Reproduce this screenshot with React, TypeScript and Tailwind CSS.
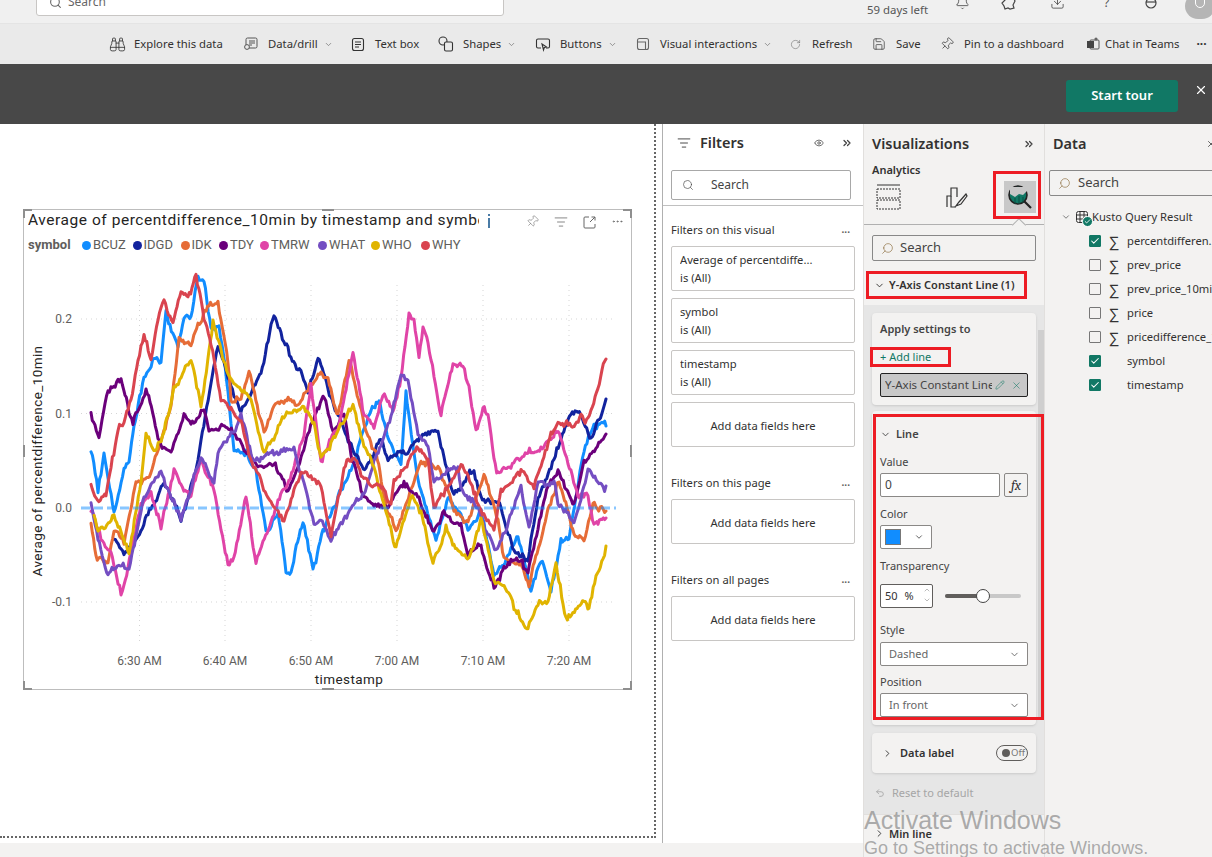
import React from "react";
import { Binoculars, ChevronDown, ChevronRight, ChevronUp, ChevronsRight, Search, Bell, Download, Save, Pin, RotateCw, X, Pencil, Eye, Ellipsis, ListFilter, Undo2, Check } from "lucide-react";

type P = [number, number];
const series: { c: string; p: P[] }[] = [
  { c: "#118DFF", p: [[90,448],[97,490],[103,453],[113,510],[123,467],[128,460],[133,427],[143,380],[153,357],[160,363],[165,313],[177,347],[183,317],[190,317],[197,273],[203,283],[210,327],[218,323],[227,387],[233,447],[245,450],[255,470],[265,530],[277,515],[285,570],[290,572],[302,517],[312,567],[322,533],[333,507],[350,470],[370,410],[378,397],[390,447],[400,460],[405,390],[417,483],[435,540],[447,497],[467,527],[480,507],[493,573],[507,553],[517,537],[530,588],[540,558],[550,588],[560,537],[568,537],[583,450],[593,427],[605,425]] },
  { c: "#12239E", p: [[113,540],[123,557],[147,517],[163,480],[180,517],[197,457],[210,383],[217,343],[230,387],[240,410],[260,370],[273,313],[287,350],[307,390],[317,352],[327,390],[340,423],[353,450],[365,470],[380,437],[387,457],[405,450],[423,433],[437,430],[443,457],[453,493],[473,470],[480,497],[500,505],[513,547],[527,563],[537,497],[553,457],[567,420],[577,410],[590,440],[605,398]] },
  { c: "#E66C37", p: [[90,523],[95,557],[107,560],[113,527],[123,540],[135,480],[147,480],[160,440],[170,400],[178,333],[190,343],[197,320],[208,303],[217,303],[227,360],[230,397],[240,397],[248,367],[263,433],[273,403],[297,403],[320,372],[327,380],[337,417],[348,357],[363,423],[375,453],[387,513],[395,533],[420,463],[437,467],[453,510],[467,523],[483,470],[497,520],[503,557],[517,560],[528,583],[547,510],[558,482],[573,533],[583,538],[592,500],[605,510]] },
  { c: "#6B007B", p: [[90,412],[98,438],[107,390],[120,377],[132,423],[145,385],[157,437],[170,453],[183,410],[190,422],[203,407],[208,430],[222,427],[233,430],[243,447],[257,467],[273,463],[287,490],[300,457],[307,430],[322,397],[333,433],[343,417],[350,453],[363,497],[383,507],[403,483],[418,495],[433,533],[443,513],[460,523],[467,550],[480,547],[493,588],[503,567],[517,557],[527,573],[547,487],[557,470],[565,487],[573,507],[583,460],[592,452],[605,433]] },
  { c: "#E044A7", p: [[90,510],[100,537],[110,553],[120,590],[127,565],[140,500],[150,490],[160,525],[173,467],[180,483],[190,495],[200,460],[213,487],[227,563],[233,557],[245,497],[255,563],[277,500],[292,470],[303,433],[310,387],[320,460],[337,427],[352,352],[363,413],[373,427],[382,393],[392,413],[400,380],[408,317],[413,322],[418,353],[422,328],[427,343],[433,373],[440,417],[452,367],[462,367],[468,390],[475,432],[482,407],[487,417],[493,460],[497,473],[520,457],[547,440],[557,427],[567,460],[577,493],[587,493],[593,523],[605,517]] },
  { c: "#744EC2", p: [[90,500],[97,543],[107,577],[115,563],[128,570],[143,497],[160,470],[180,518],[200,453],[213,483],[217,453],[233,430],[240,413],[253,460],[273,450],[293,450],[303,483],[313,522],[320,518],[330,537],[347,510],[363,493],[380,447],[400,378],[407,383],[417,433],[427,447],[433,483],[457,463],[460,487],[477,507],[495,550],[520,487],[528,525],[537,480],[553,480],[557,502],[573,520],[587,467],[605,485]] },
  { c: "#E0B400", p: [[93,513],[97,533],[113,517],[128,550],[140,483],[145,430],[153,453],[163,433],[173,390],[190,355],[200,407],[212,323],[227,373],[240,387],[250,397],[263,453],[280,420],[303,407],[313,420],[320,453],[330,443],[352,402],[363,447],[370,460],[383,507],[395,545],[410,492],[420,507],[432,560],[445,527],[453,548],[468,557],[480,513],[493,578],[503,583],[513,607],[527,628],[537,598],[547,605],[555,563],[565,618],[583,598],[588,608],[595,575],[605,545]] },
  { c: "#D9444F", p: [[90,485],[95,505],[105,498],[110,470],[117,430],[123,423],[130,400],[137,360],[143,332],[150,357],[157,317],[163,300],[172,323],[180,293],[187,303],[195,275],[203,317],[213,357],[220,400],[230,407],[240,417],[248,453],[257,470],[267,497],[283,520],[300,470],[320,483],[330,538],[343,470],[353,455],[363,480],[383,487],[390,507],[393,483],[413,453],[420,447],[427,460],[433,510],[460,463],[477,503],[493,530],[500,490],[520,470],[533,483],[550,433],[557,422],[573,427],[580,410],[587,417],[597,383],[605,358]] },
];

function jitter(pts: P[], seed: number) {
  let s = seed * 7919 + 13;
  const rnd = () => { s = (s * 16807) % 2147483647; return (s % 1000) / 1000 - 0.5; };
  const out: string[] = [];
  let walk = 0;
  for (let i = 0; i < pts.length - 1; i++) {
    const [a, b] = pts[i]; const [c, d] = pts[i + 1];
    const n = Math.max(1, Math.round((c - a) / 1.4));
    for (let k = 0; k < n; k++) {
      const t = k / n;
      walk = walk * 0.8 + rnd() * 4.5;
      const off = walk + rnd() * 4;
      out.push(`${(a + (c - a) * t - 23).toFixed(1)},${(b + (d - b) * t + off - 209).toFixed(1)}`);
    }
  }
  const l = pts[pts.length - 1];
  out.push(`${l[0] - 23},${l[1] - 209}`);
  return out.join(" ");
}

const font = "[font-family:'Noto_Sans',sans-serif]";

function Tool({ w, icon, label, caret }: { w: string; icon: React.ReactNode; label: string; caret?: boolean }) {
  return (
    <div className={`flex items-center shrink-0 ${w}`}>
      <span className="w-[18px] h-[18px] flex items-center justify-center mr-[8px] text-[#333]">{icon}</span>
      <span className="text-[11.3px] text-[#323130] whitespace-nowrap">{label}</span>
      {caret && <ChevronDown size={9} className="ml-[6px] text-[#777]" />}
    </div>
  );
}

function FilterCard({ title }: { title: string }) {
  return (
    <div className="h-[45px] border border-[#c8c6c4] rounded-[2px] bg-white px-[8px] pt-[4px] mb-[7px] text-[11.2px] leading-[18px] text-[#323130]">
      <div className="truncate">{title}</div>
      <div>is (All)</div>
    </div>
  );
}
function AddCard() {
  return <div className="h-[45px] border border-[#c8c6c4] rounded-[2px] bg-white flex items-center justify-center pt-[3px] text-[11.2px] text-[#323130]">Add data fields here</div>;
}
function SecHead({ t }: { t: string }) {
  return (
    <div className="flex items-center justify-between h-[16px] mb-[8px] text-[11.2px] text-[#323130]">
      <span>{t}</span><span className="text-[#605e5c] mr-[5px] text-[10px] font-bold -mt-[2px]">...</span>
    </div>
  );
}

function Field({ label, checked, sigma = true }: { label: string; checked?: boolean; sigma?: boolean }) {
  return (
    <div className="h-[24px] flex items-center pl-[44px] text-[11.2px] text-[#323130] whitespace-nowrap">
      <span className={`w-[12px] h-[12px] shrink-0 rounded-[1px] flex items-center justify-center border ${checked ? "bg-[#117865] border-[#117865]" : "bg-[#f3f2f1] border-[#777]"}`}>
        {checked && <Check size={10} strokeWidth={2.5} className="text-white" />}
      </span>
      <span className="w-[26px] shrink-0 text-center text-[15px] leading-none text-[#333] font-light">{sigma ? "∑" : ""}</span>
      <span className="shrink-0">{label}</span>
    </div>
  );
}

function Handle({ cls }: { cls: string }) {
  return <div className={`absolute ${cls}`} />;
}

export default function App() {
  return (
    <div className={`relative w-[1212px] h-[857px] overflow-hidden bg-white flex flex-col ${font}`}>
      {/* top bar */}
      <div className="h-[24px] shrink-0 bg-[#f0f0f0] border-b border-[#e4e4e4] overflow-hidden flex items-start text-[#444]">
        <div className="ml-[36px] -mt-[12px] w-[468px] h-[28px] shrink-0 bg-white border border-[#c8c6c4] rounded-[3px] flex items-center pl-[12px] text-[12px] text-[#666]">
          <Search size={13} className="mr-[6px]" />Search
        </div>
        <div className="ml-[363px] mt-[1px] text-[11.4px] text-[#555] w-[70px] shrink-0 whitespace-nowrap">59 days left</div>
        <Bell size={15} strokeWidth={1.3} className="ml-[18px] -mt-[5px] shrink-0" />
        <svg width="18" height="16" viewBox="0 0 18 16" className="ml-[31px] -mt-[5px] shrink-0" fill="none" stroke="#444" strokeWidth="1.2"><path d="M6 2h6l2 4-2 4 1 3-4 1-2-1-3 1-1-3-2-3 3-3z" /></svg>
        <Download size={15} strokeWidth={1.3} className="ml-[31px] -mt-[5px] shrink-0" />
        <span className="ml-[39px] -mt-[6px] text-[12px] text-[#555]">?</span>
        <svg width="14" height="14" viewBox="0 0 14 14" className="ml-[35px] -mt-[4px] shrink-0" fill="none" stroke="#444" strokeWidth="1.2"><circle cx="7" cy="7" r="5" /><path d="M2 6h10" /></svg>
        <div className="ml-[27px] -mt-[7px] w-[30px] h-[26px] rounded-full bg-[#b5b5b5] shrink-0 flex items-start justify-center"><div className="w-[10px] h-[14px] rounded-full border border-white mt-[1px]" /></div>
      </div>

      {/* toolbar */}
      <div className="h-[40px] shrink-0 bg-[#eaeaea] flex items-center pl-[108px]">
        <Tool w="w-[134px]" icon={<Binoculars size={17} strokeWidth={1.2} />} label="Explore this data" />
        <Tool w="w-[107px]" icon={<svg width="16" height="16" viewBox="0 0 16 16" fill="none" stroke="#555" strokeWidth="1"><rect x="3" y="2" width="11" height="10" rx="1.5" /><path d="M6 5h6M6 7h6M6 9h3" /><circle cx="4" cy="11" r="2.4" fill="#eaeaea" /></svg>} label="Data/drill" caret />
        <Tool w="w-[88px]" icon={<svg width="14" height="15" viewBox="0 0 14 15" fill="none" stroke="#333" strokeWidth="1.1"><rect x="1.5" y="1.5" width="11" height="12" rx="2" /><path d="M4 5h6M4 7.5h6M4 10h4" /></svg>} label="Text box" />
        <Tool w="w-[97px]" icon={<svg width="16" height="16" viewBox="0 0 16 16" fill="none" stroke="#333" strokeWidth="1.1"><circle cx="5" cy="5" r="4" /><rect x="6.5" y="6" width="8" height="9" rx="1.5" fill="#eaeaea" /></svg>} label="Shapes" caret />
        <Tool w="w-[100px]" icon={<svg width="16" height="15" viewBox="0 0 16 15" fill="none" stroke="#333" strokeWidth="1.1"><path d="M6 11H3a1.5 1.5 0 0 1-1.5-1.5v-6A1.5 1.5 0 0 1 3 2h10a1.5 1.5 0 0 1 1.5 1.5v6A1.5 1.5 0 0 1 13 11h-2" /><path d="M7 7l4.5 3-2.2.5-.8 2.5z" /></svg>} label="Buttons" caret />
        <Tool w="w-[152px]" icon={<svg width="14" height="14" viewBox="0 0 14 14" fill="none" stroke="#666" strokeWidth="1.1"><rect x="1.5" y="1.5" width="11" height="11" rx="2" /><path d="M1.5 5h8v7.5" /></svg>} label="Visual interactions" caret />
        <Tool w="w-[84px]" icon={<RotateCw size={11} strokeWidth={1.2} className="text-[#666]" />} label="Refresh" />
        <Tool w="w-[68px]" icon={<Save size={14} strokeWidth={1.2} />} label="Save" />
        <Tool w="w-[148px]" icon={<Pin size={14} strokeWidth={1.2} className="rotate-45" />} label="Pin to a dashboard" />
        <div className="flex items-center shrink-0">
          <svg width="14" height="14" viewBox="0 0 14 14" className="mr-[5px]"><rect x="4" y="3" width="9" height="9" rx="1" fill="none" stroke="#555" /><rect x="1" y="4" width="7" height="7" fill="#444" /><circle cx="10" cy="2" r="1.6" fill="#666" /></svg>
          <span className="text-[11.3px] text-[#323130] whitespace-nowrap">Chat in Teams</span>
          <span className="ml-[17px] text-[12px] text-[#333] font-bold leading-none -mt-[6px]">...</span>
        </div>
      </div>

      {/* banner */}
      <div className="h-[60px] shrink-0 bg-[#484848] flex items-center justify-end">
        <button className="mt-[3px] w-[112px] h-[32px] rounded-[3px] bg-[#117865] text-white text-[13px] font-semibold">Start tour</button>
        <X size={14} className="text-white ml-[16px] mr-[4px] -mt-[9px]" />
      </div>

      {/* main */}
      <div className="flex-1 min-h-0 flex">
        {/* canvas */}
        <div className="w-[663px] shrink-0 flex flex-col">
          <div className="flex-1 min-h-0 flex border-r border-[#b0b0b0] bg-white">
            <div className="w-[656px] h-[714px] border-r-2 border-b-2 border-dotted border-[#666] pl-[23px] pt-[85px]">
              {/* visual */}
              <div className="relative w-[609px] h-[481px] border border-[#bdbdbd]">
                <Handle cls="-left-[1px] -top-[1px] w-[9px] h-[2px] bg-[#8f8f8f]" />
                <Handle cls="-left-[1px] -top-[1px] w-[2px] h-[9px] bg-[#8f8f8f]" />
                <Handle cls="-right-[1px] -top-[1px] w-[9px] h-[2px] bg-[#8f8f8f]" />
                <Handle cls="-right-[1px] -top-[1px] w-[2px] h-[9px] bg-[#8f8f8f]" />
                <Handle cls="-left-[1px] -bottom-[1px] w-[9px] h-[2px] bg-[#8f8f8f]" />
                <Handle cls="-left-[1px] -bottom-[1px] w-[2px] h-[9px] bg-[#8f8f8f]" />
                <Handle cls="-right-[1px] -bottom-[1px] w-[9px] h-[2px] bg-[#8f8f8f]" />
                <Handle cls="-right-[1px] -bottom-[1px] w-[2px] h-[9px] bg-[#8f8f8f]" />
                <Handle cls="left-[298px] -top-[1px] w-[12px] h-[2px] bg-[#8f8f8f]" />
                <Handle cls="left-[298px] -bottom-[1px] w-[12px] h-[2px] bg-[#8f8f8f]" />
                <Handle cls="-left-[1px] top-[235px] w-[2px] h-[12px] bg-[#8f8f8f]" />
                <Handle cls="-right-[1px] top-[235px] w-[2px] h-[12px] bg-[#8f8f8f]" />

                <svg width="609" height="481" className="absolute left-0 top-0" viewBox="0 0 609 481">
                  <g stroke="#d5d5d5" strokeWidth="1" strokeDasharray="1 4" fill="none">
                    {[109, 203.5, 392].map((y) => <path key={y} d={`M57 ${y}H592`} />)}
                    {[115.5, 201, 287, 373, 459, 545].map((x) => <path key={x} d={`M${x} 75V431`} />)}
                  </g>
                  {series.map((s, i) => (
                    <polyline key={s.c} points={jitter(s.p, i + 2)} fill="none" stroke={s.c} strokeWidth="3" strokeLinejoin="round" strokeLinecap="round" />
                  ))}
                  <path d="M57 298H592" stroke="#118DFF" strokeOpacity="0.5" strokeWidth="3" strokeDasharray="9 4" />
                  <g fontFamily="Roboto, sans-serif" fontSize="12" fill="#605e5c" textAnchor="end">
                    <text x="48" y="113">0.2</text><text x="48" y="208">0.1</text><text x="48" y="302">0.0</text><text x="48" y="396">-0.1</text>
                  </g>
                  <g fontFamily="Roboto, sans-serif" fontSize="12" fill="#605e5c" textAnchor="middle">
                    {[["6:30 AM",115.5],["6:40 AM",201],["6:50 AM",287],["7:00 AM",373],["7:10 AM",459],["7:20 AM",545]].map(([t,x]) => <text key={t as string} x={x as number} y="455">{t}</text>)}
                  </g>
                  <text x="325" y="474" textAnchor="middle" fontFamily="Roboto, sans-serif" fontSize="13.5" letterSpacing="0.4" fill="#252423">timestamp</text>
                  <text transform="translate(18 251) rotate(-90)" textAnchor="middle" fontFamily="Roboto, sans-serif" fontSize="13.5" letterSpacing="0.4" fill="#252423">Average of percentdifference_10min</text>
                </svg>

                <div className="relative flex items-start pl-[4px] pt-[0px]">
                  <div className="w-[451px] overflow-hidden whitespace-nowrap text-[15.5px] leading-[20px] tracking-[0.55px] text-[#252423] [font-family:Roboto,sans-serif]">Average of percentdifference_10min by timestamp and symbol</div>
                  <div className="ml-[9px] mt-[4px] w-[2px] flex flex-col items-center shrink-0">
                    <div className="w-[2px] h-[2px] bg-[#4a7ba6]" />
                    <div className="mt-[2px] w-[2px] h-[10px] bg-[#4a7ba6]" />
                  </div>
                  <Pin size={13} strokeWidth={1} className="ml-[36px] mt-[5px] rotate-45 text-[#666] shrink-0" />
                  <ListFilter size={14} strokeWidth={1.2} className="ml-[15px] mt-[5px] text-[#555] shrink-0" />
                  <svg width="13" height="13" viewBox="0 0 13 13" fill="none" stroke="#666" strokeWidth="1" className="ml-[15px] mt-[6px] shrink-0"><path d="M6 1H2a1 1 0 0 0-1 1v9a1 1 0 0 0 1 1h9a1 1 0 0 0 1-1V8" /><path d="M7 6l5-5M8.500 1H12V4.500" /></svg>
                  <Ellipsis size={13} strokeWidth={1.5} className="ml-[15px] mt-[5px] text-[#666] shrink-0" />
                </div>
                <div className="relative flex items-center pl-[4px] mt-[7px] h-[16px] text-[13px] text-[#605e5c] [font-family:Roboto,sans-serif] whitespace-nowrap">
                  <span className="font-bold w-[54px] shrink-0">symbol</span>
                  {[["BCUZ","bg-[#118DFF]","w-[39.500px]"],["IDGD","bg-[#12239E]","w-[37px]"],["IDK","bg-[#E66C37]","w-[27.500px]"],["TDY","bg-[#6B007B]","w-[30px]"],["TMRW","bg-[#E044A7]","w-[47px]"],["WHAT","bg-[#744EC2]","w-[42px]"],["WHO","bg-[#E0B400]","w-[39px]"],["WHY","bg-[#D9444F]","w-[40px]"]].map(([n,b,w]) => (
                    <span key={n} className="flex items-center shrink-0">
                      <span className={`w-[9px] h-[9px] rounded-full mr-[2px] shrink-0 ${b}`} />
                      <span className={w}>{n}</span>
                    </span>
                  ))}
                </div>
              </div>
            </div>
          </div>
          <div className="h-[14px] shrink-0 bg-[#f3f2f1]" />
        </div>

        {/* filters */}
        <div className="w-[201px] shrink-0 bg-white border-r border-[#e1dfdd] flex flex-col">
          <div className="flex items-center h-[38px] pl-[14px] pr-[10px] shrink-0">
            <ListFilter size={14} strokeWidth={1.5} className="text-[#333] mr-[9px]" />
            <span className="text-[14.5px] font-semibold text-[#323130]">Filters</span>
            <Eye size={10} className="ml-auto text-[#555]" />
            <ChevronsRight size={12} strokeWidth={2.5} className="ml-[17px] text-[#444]" />
          </div>
          <div className="mt-[8px] mx-[8px] h-[30px] border border-[#a8a8a8] rounded-[2px] flex items-center pl-[10px] text-[12px] text-[#444] w-[180px] shrink-0">
            <Search size={12} strokeWidth={1.3} className="mr-[17px]" />Search
          </div>
          <div className="h-[6px] shrink-0 border-b border-[#c0c0c0]" />
          <div className="flex-1 min-h-0 px-[8px] pt-[16px]">
            <SecHead t="Filters on this visual" />
            <FilterCard title="Average of percentdiffe..." />
            <FilterCard title="symbol" />
            <FilterCard title="timestamp" />
            <AddCard />
            <div className="h-[28px]" />
            <SecHead t="Filters on this page" />
            <AddCard />
            <div className="h-[28px]" />
            <SecHead t="Filters on all pages" />
            <AddCard />
          </div>
          <div className="h-[14px] shrink-0 bg-[#f3f2f1]" />
        </div>

        {/* visualizations */}
        <div className="w-[181px] shrink-0 bg-[#f3f2f1] border-r border-[#e1dfdd] flex flex-col">
          <div className="flex items-center justify-between h-[38px] pl-[8px] pr-[9px] pt-[2px] shrink-0">
            <span className="text-[14.5px] font-semibold text-[#323130]">Visualizations</span>
            <ChevronsRight size={12} strokeWidth={2.5} className="text-[#444]" />
          </div>
          <div className="pl-[8px] text-[11px] font-semibold leading-[16px] text-[#323130] shrink-0">Analytics</div>
          <div className="flex items-center h-[38px] pl-[12px] shrink-0">
            <svg width="25" height="26" viewBox="0 0 25 26" fill="none" stroke="#333" strokeDasharray="2 1" className="shrink-0"><path d="M1 1h23" strokeDasharray="none" /><rect x="1" y="5" width="23" height="9" /><rect x="1" y="16" width="23" height="9" /></svg>
            <svg width="24" height="24" viewBox="0 0 24 24" className="ml-[43px] shrink-0" fill="none" stroke="#333" strokeWidth="1.2"><path d="M3 22V11h4V3h6v9" /><path d="M7 11v11h5" /><path d="M22 9l-7 8-3 4 5-2 6-8z" /></svg>
            <div className="ml-[36px] w-[32px] h-[32px] bg-[#c8c8c8] flex items-center justify-center shrink-0">
              <svg width="26" height="26" viewBox="0 0 26 26" className="shrink-0"><circle cx="11" cy="11" r="9" fill="#117865" stroke="#222" strokeWidth="1.6" /><path d="M3 10l5 3 4-3 4 1 4-4V3H3z" fill="#c8c8c8" /><path d="M8 14v6M12 12v8M16 13v6" stroke="#0a4f43" /><path d="M17.5 17.5L24 24" stroke="#222" strokeWidth="2.2" /></svg>
            </div>
          </div>
          <div className="relative h-[9px] shrink-0 border-b border-[#b0b0b0]">
            <div className="absolute left-[150px] top-[4px] w-[10px] h-[10px] rotate-45 bg-[#f3f2f1] border-l border-t border-[#b0b0b0]" />
          </div>
          <div className="ml-[8px] mt-[10px] w-[164px] h-[26px] shrink-0 border border-[#888] rounded-[2px] flex items-center pl-[8px] text-[13px] text-[#444]">
            <Search size={13} strokeWidth={1.2} className="mr-[6px] -scale-x-100 text-[#8a6a3a]" />Search
          </div>
          <div className="h-[44px] shrink-0 flex items-center pl-[10px] pt-[4px] text-[11px] font-semibold text-[#323130] whitespace-nowrap">
            <ChevronDown size={11} className="mr-[4px]" />Y-Axis Constant Line (1)
          </div>
          <div className="flex-1 min-h-0 bg-[#e6e6e6] flex flex-col pt-[8px] relative">
            <div className="absolute right-0 top-[25px] w-[6px] h-[390px] bg-[#cfcfcf]" />
            <div className="ml-[8px] w-[164px] h-[92px] shrink-0 bg-[#f3f2f1] rounded-[4px] px-[8px] pt-[8px] shadow-sm">
              <div className="text-[11px] font-semibold leading-[16px] text-[#444]">Apply settings to</div>
              <div className="mt-[13px] text-[11px] leading-[14px] text-[#117865]">+ Add line</div>
              <div className="mt-[9px] h-[24px] w-[148px] bg-[#c8c8c8] border border-[#222] rounded-[2px] flex items-center pl-[4px] pr-[5px] text-[11.5px] text-[#444] whitespace-nowrap overflow-hidden">
                <span className="w-[107px] overflow-hidden shrink-0">Y-Axis Constant Line</span>
                <Pencil size={10} strokeWidth={1.2} className="ml-[3px] text-[#117865] shrink-0" />
                <X size={11} strokeWidth={1.2} className="ml-[6px] text-[#117865] shrink-0" />
              </div>
            </div>
            <div className="mt-[6px] ml-[8px] w-[164px] h-[314px] shrink-0 bg-[#f3f2f1] rounded-[4px] px-[8px] pt-[15px] text-[11px] text-[#444] shadow-sm">
              <div className="flex items-center h-[16px] font-semibold"><ChevronDown size={11} className="mr-[5px]" />Line</div>
              <div className="mt-[12px] leading-[16px]">Value</div>
              <div className="mt-[3px] flex">
                <div className="w-[120px] h-[24px] bg-white border border-[#8a8886] rounded-[2px] flex items-center pl-[4px] text-[12px] text-[#444]">0</div>
                <div className="ml-[4px] w-[24px] h-[24px] border border-[#8a8886] rounded-[2px] flex items-center justify-center font-serif italic text-[14px] text-[#333]">fx</div>
              </div>
              <div className="mt-[9px] leading-[16px]">Color</div>
              <div className="mt-[3px] w-[52px] h-[24px] bg-white border border-[#8a8886] rounded-[2px] flex items-center pl-[4px]">
                <span className="w-[16px] h-[16px] bg-[#118DFF] border border-[#777]" />
                <ChevronDown size={10} className="ml-[13px]" />
              </div>
              <div className="mt-[9px] leading-[16px]">Transparency</div>
              <div className="mt-[6px] flex items-center h-[32px]">
                <div className="w-[53px] h-[24px] bg-white border border-[#605e5c] rounded-[2px] flex items-center pl-[4px] text-[#333] relative">
                  50<span className="ml-[7px]">%</span>
                  <span className="absolute right-[1px] top-[1px] flex flex-col text-[#999]"><ChevronUp size={8} className="mb-[2px]" /><ChevronDown size={8} /></span>
                </div>
                <div className="ml-[12px] w-[76px] h-[4px] rounded-[2px] bg-[#c8c8c8] relative">
                  <div className="w-[38px] h-[4px] bg-[#605e5c] rounded-[2px]" />
                  <div className="absolute left-[31px] -top-[5px] w-[14px] h-[14px] rounded-full bg-white border border-[#444]" />
                </div>
              </div>
              <div className="mt-[10px] leading-[16px]">Style</div>
              <div className="mt-[4px] w-[148px] h-[24px] bg-white border border-[#8a8886] rounded-[2px] flex items-center justify-between pl-[8px] pr-[7px] text-[#666]">Dashed<ChevronDown size={11} /></div>
              <div className="mt-[8px] leading-[16px]">Position</div>
              <div className="mt-[3px] w-[148px] h-[24px] bg-white border border-[#8a8886] rounded-[2px] flex items-center justify-between pl-[8px] pr-[7px] text-[#666]">In front<ChevronDown size={11} /></div>
            </div>
            <div className="mt-[8px] ml-[8px] w-[164px] h-[40px] shrink-0 bg-[#f3f2f1] rounded-[4px] flex items-center pl-[10px] pr-[8px] text-[11px] font-semibold text-[#333] shadow-sm">
              <ChevronRight size={11} className="mr-[7px]" />Data label
              <div className="ml-auto w-[32px] h-[16px] rounded-full border border-[#605e5c] flex items-center pl-[5px] text-[9.5px] font-normal text-[#777]"><span className="w-[8px] h-[8px] rounded-full bg-[#605e5c] mr-[1px] shrink-0" />Off</div>
            </div>
            <div className="mt-[12px] ml-[11px] flex items-center text-[11px] text-[#a5a5a5]"><Undo2 size={10} className="mr-[7px]" />Reset to default</div>
            <div className="absolute left-0 right-0 bottom-0 h-[43px] bg-[#f3f2f1] border-t border-[#e1dfdd] flex items-start pt-[11px] pl-[10px] text-[11px] font-semibold text-[#333]">
              <ChevronRight size={11} className="mr-[4px] mt-[2px]" />Min line
            </div>
          </div>
        </div>

        {/* data */}
        <div className="flex-1 min-w-0 bg-[#f3f2f1] overflow-hidden">
          <div className="flex items-center justify-between h-[38px] pl-[8px] pt-[2px] whitespace-nowrap">
            <span className="text-[14.5px] font-semibold text-[#323130]">Data</span>
            <X size={10} className="-mr-[4px] text-[#444]" />
          </div>
          <div className="mt-[8px] ml-[4px] w-[170px] h-[26px] border border-[#888] rounded-[2px] flex items-center pl-[8px] text-[13px] text-[#444]">
            <Search size={13} strokeWidth={1.2} className="mr-[7px] -scale-x-100 text-[#8a6a3a]" />Search
          </div>
          <div className="mt-[9px] h-[24px] flex items-center pl-[16px] text-[11.2px] text-[#323130] whitespace-nowrap">
            <ChevronDown size={10} className="mr-[4px] text-[#666]" />
            <span className="relative mr-[3px] w-[14px] h-[14px]">
              <svg width="14" height="14" viewBox="0 0 14 14" fill="none" stroke="#333" strokeWidth="1"><rect x="1.5" y="1.5" width="11" height="11" rx="2" /><path d="M1.5 5h11M1.5 9h11M5 1.5v11M9 1.500v11" /></svg>
              <span className="absolute left-[7px] top-[6px] w-[11px] h-[11px] rounded-full bg-[#117865] border border-white flex items-center justify-center"><Check size={7} strokeWidth={3} className="text-white" /></span>
            </span>
            Kusto Query Result
          </div>
          <Field label="percentdifferen..." checked />
          <Field label="prev_price" />
          <Field label="prev_price_10min" />
          <Field label="price" />
          <Field label="pricedifference_10min" />
          <Field label="symbol" checked sigma={false} />
          <Field label="timestamp" checked sigma={false} />
        </div>
      </div>

      {/* annotation boxes */}
      <div className="absolute left-[993px] top-[171px] w-[48px] h-[48px] border-[3px] border-[#ed1c24]" />
      <div className="absolute left-[866px] top-[271px] w-[161px] h-[28px] border-[3px] border-[#ed1c24]" />
      <div className="absolute left-[870px] top-[347px] w-[81px] h-[20px] border-[3px] border-[#ed1c24]" />
      <div className="absolute left-[873px] top-[414px] w-[171px] h-[306px] border-[3px] border-[#ed1c24]" />

      {/* watermark */}
      <div className="absolute left-[864px] top-[804px] text-[25px] leading-[32px] text-[#8a8a8a]/70 [font-family:'Liberation_Sans',sans-serif] whitespace-nowrap pointer-events-none">Activate Windows</div>
      <div className="absolute left-[864px] top-[836px] text-[18px] leading-[24px] text-[#8a8a8a]/70 [font-family:'Liberation_Sans',sans-serif] whitespace-nowrap pointer-events-none">Go to Settings to activate Windows.</div>
    </div>
  );
}
